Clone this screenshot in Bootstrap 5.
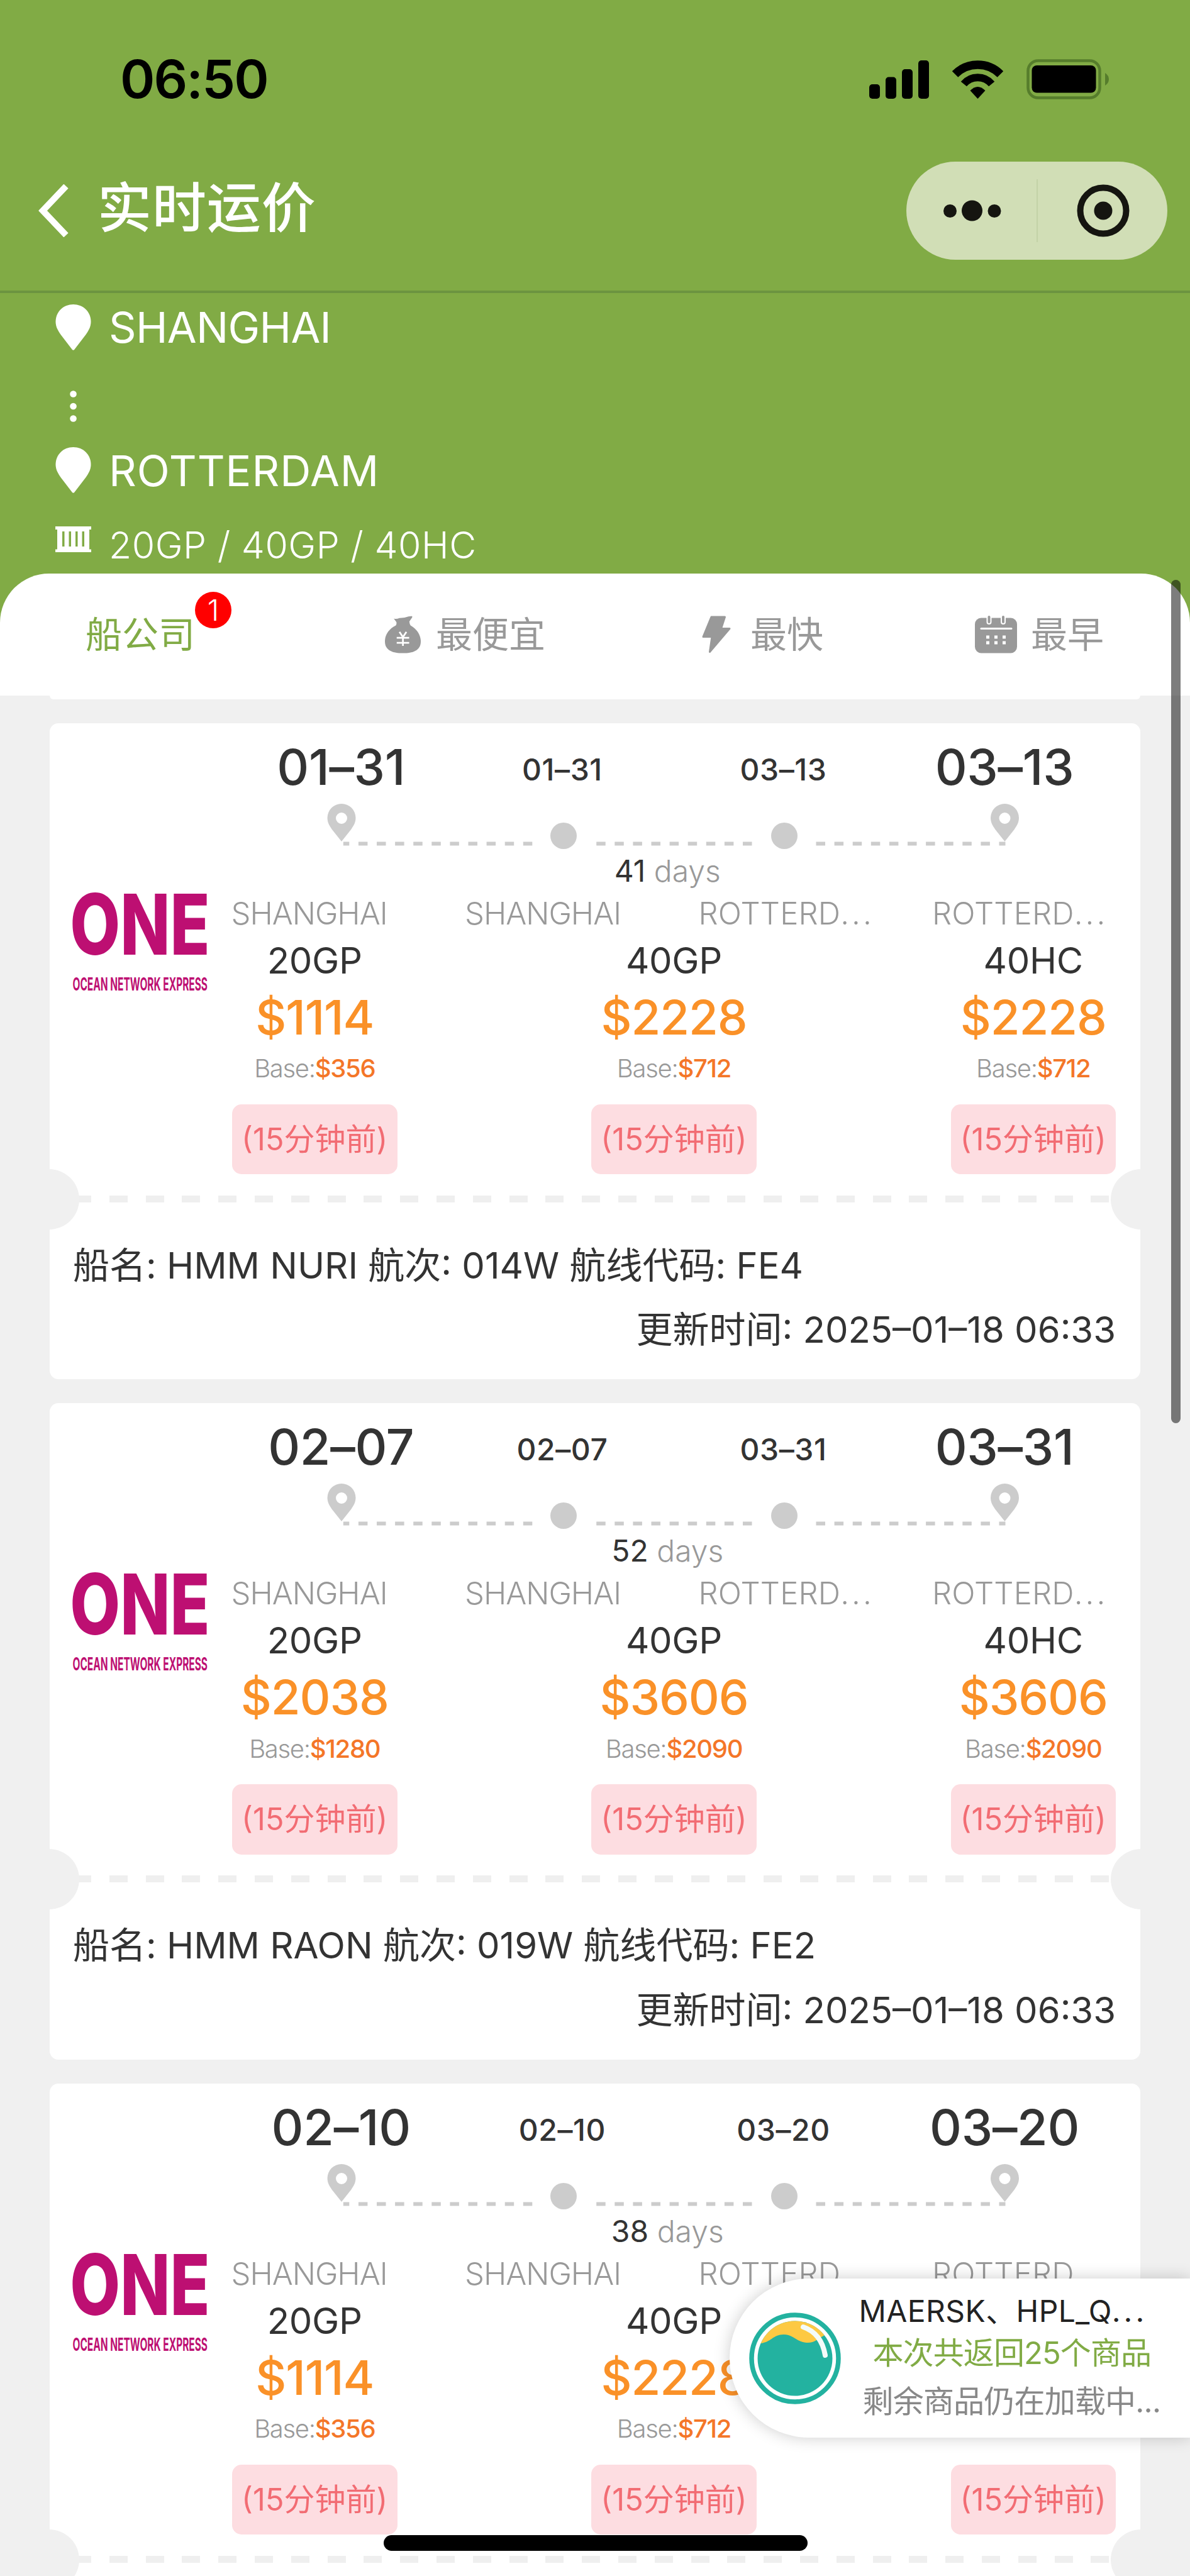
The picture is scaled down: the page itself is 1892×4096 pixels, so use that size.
<!DOCTYPE html>
<html lang="zh-CN">
<head>
<meta charset="utf-8">
<meta name="viewport" content="width=device-width, initial-scale=1">
<title>实时运价</title>
<link href="https://cdn.jsdelivr.net/npm/bootstrap@5.3.0/dist/css/bootstrap.min.css" rel="stylesheet">
<style>
  :root { --brand: #81ab45; --page: #f0f0f0; --one: #bd0f72; }
  body { font-family: Inter, "Noto Sans CJK SC", sans-serif; background: var(--page); color: #333; font-size: 58px; line-height: 1; }
  svg { display: block; flex: none; }
  .screen { width: 1892px; height: 4096px; }
  .brand-bg { background: var(--brand); }

  .statusbar { height: 252px; padding: 0 129px 0 191px; }
  .clock { font-size: 84px; font-weight: 600; letter-spacing: -1.9px; color: #000; }
  .wifi { margin: 0 37px 0 36px; }
  .topnav { height: 213.5px; padding: 7px 36px 50px 61px; border-bottom: 4.5px solid #6c9440; }
  .page-title { font-size: 86px; font-weight: 500; letter-spacing: .9px; margin-left: 45px; padding-bottom: 8px; }
  .capsule { width: 415px; height: 156px; background: #d1deb6; border-radius: 78px; }
  .capsule-sep { width: 2px; height: 100px; background: #c3d2a7; }

  .route { height: 446.1px; padding-left: 88px; font-size: 68px; }
  .route-ico { width: 57px; margin-right: 28px; }
  .row-from { height: 109px; letter-spacing: -.7px; }
  .row-gap { height: 142px; }
  .row-to { height: 62px; letter-spacing: 1px; }
  .row-box { height: 133px; padding-top: 58px; font-size: 59px; line-height: 60px; font-weight: 340; letter-spacing: .5px; }

  .tabs-sheet { height: 194.4px; border-radius: 78px 78px 0 0; padding-left: 136px; color: #999; }
  .tab-first { width: 476px; color: var(--brand); }
  .tab-cheap { width: 504px; }
  .tab-fast { width: 434px; }
  .tab-item svg { margin-right: 24px; }
  .tab-item.tab-fast svg { margin-right: 26px; }
  .tab-item.tab-early svg { margin-right: 22px; }
  .tab-count { width: 58px; height: 58px; background: #f00; font-size: 47px; font-weight: 300; top: -39px; left: 174px; }
  .filter-edge { height: 6px; margin: 0 79px 38px; border-radius: 0 0 6px 6px; }

  .fare { height: 1043.5px; margin: 0 79px 38px; border-radius: 14px; }
  .carrier { width: 287.5px; padding: 270px 0 0 36.5px; }
  .carrier svg { overflow: visible; fill: var(--one); font-family: Inter, sans-serif; }
  .fare-main { width: 1407.5px; }
  .dates { height: 128px; }
  .dates > div { width: 351.6px; text-align: center; font-weight: 500; font-size: 48px; line-height: 147px; letter-spacing: .6px; }
  .dates > .big { font-size: 79px; line-height: 139px; letter-spacing: -.3px; }
  .transit { height: 71px; line-height: 70px; font-size: 48px; padding-right: 18px; }
  .transit span { color: #999; font-weight: 350; }
  .ports { height: 64px; line-height: 64px; font-size: 49px; font-weight: 340; color: #999; letter-spacing: -1px; padding-left: 1px; }
  .ports > div { width: 291px; }
  .ports > div:last-child { width: 292px; }
  .ports .cut { letter-spacing: .2px; }
  .ports .cut span { letter-spacing: 4px; }
  .quotes { padding-left: 2.5px; }
  .quote { width: 262.5px; text-align: center; }
  .q-type { height: 84.6px; line-height: 84.6px; font-size: 58px; letter-spacing: -.3px; }
  .q-price { height: 96.8px; line-height: 95px; font-size: 76px; font-weight: 500; letter-spacing: -1.1px; color: #fa9128; }
  .q-base { height: 66.6px; line-height: 66.6px; font-size: 40px; font-weight: 360; letter-spacing: -1.3px; color: #999; }
  .q-base span { color: #f47628; font-weight: 500; }
  .q-ago { margin-top: 23px; height: 111.5px; line-height: 111.5px; border-radius: 15px; background: #fddde1; color: #f26c73; font-size: 49px; }
  .tear { margin-top: 33.5px; height: 11px; }
  .tear-line { height: 11px; margin: 0 37px; background: repeating-linear-gradient(90deg, #efefef 0 29px, transparent 29px 57.8px); }
  .notch { width: 96px; height: 96px; background: var(--page); top: -42px; }
  .notch.l { left: -49px; } .notch.r { right: -49px; }
  .vessel { padding: 49px 39px 0 37px; line-height: 102.5px; }

  .scroll-thumb { width: 15px; height: 1341px; left: 1861.5px; top: 922px; border-radius: 8px; background: rgba(0,0,0,.51); }
  .loading { left: 1159.5px; top: 3623px; width: 732.5px; height: 253px; border-radius: 127px 0 0 127px; padding-left: 31px; box-shadow: 0 0 26px rgba(0,0,0,.2); }
  .loading-text { padding: 17px 0 0 29px; white-space: nowrap; }
  .lt-1 { height: 69px; line-height: 69px; font-size: 48px; color: #222; letter-spacing: .4px; }
  .lt-1 span { letter-spacing: 5px; }
  .lt-2 { height: 66px; line-height: 66px; font-size: 49px; color: var(--brand); letter-spacing: -.9px; padding-left: 22px; }
  .lt-3 { height: 88px; line-height: 88px; font-size: 49px; color: #888; letter-spacing: -.8px; padding-left: 6px; }
  .home-bar { left: 609.5px; top: 4031px; width: 674px; height: 24.5px; }
</style>
</head>
<body>
<svg width="0" height="0" class="position-absolute">
  <symbol id="pin" viewBox="0 0 56 73"><path d="M28 0C12 0 0 12 0 27.500C0 36 4 42 8 48L26 71.500Q28 74 30 71.500L48 48C52 42 56 36 56 27.500C56 12 44 0 28 0z"/></symbol>
  <symbol id="track" viewBox="0 0 1407 72">
    <g fill="none" stroke="#ccc" stroke-width="6">
      <path d="M178.800 63.500H481.500" stroke-dasharray="14.500 14.600" stroke-dashoffset="5"/>
      <path d="M581.200 63.500H828.700" stroke-dasharray="14.500 14.600"/>
      <path d="M930.500 63.500H1231.500" stroke-dasharray="14.500 14.600"/>
    </g>
    <g fill="#ccc">
      <circle cx="529" cy="51" r="21"/><circle cx="880" cy="51" r="21"/>
      <path fill-rule="evenodd" d="M176 0a22.500 22.500 0 0 0-22.500 22.500c0 8 4 13 7 18L176 60l15.500-19.500c3-5 7-10 7-18A22.500 22.500 0 0 0 176 0zm0 14a9 9 0 1 1 0 18a9 9 0 0 1 0-18z"/>
      <path fill-rule="evenodd" d="M1230.500 0a22.500 22.500 0 0 0-22.500 22.500c0 8 4 13 7 18L1230.500 60l15.500-19.500c3-5 7-10 7-18A22.500 22.500 0 0 0 1230.500 0zm0 14a9 9 0 1 1 0 18a9 9 0 0 1 0-18z"/>
    </g>
  </symbol>
</svg>

<div class="screen position-relative overflow-hidden">
  <header class="brand-bg text-white">
    <div class="statusbar d-flex align-items-center justify-content-between">
      <div class="clock">06:50</div>
      <div class="d-flex align-items-center">
        <svg width="96" height="61" viewBox="0 0 96 61"><rect y="38" width="17" height="23" rx="5"/><rect x="26" y="26.500" width="17" height="34.500" rx="5"/><rect x="52" y="14" width="17" height="47" rx="5"/><rect x="78" width="17" height="61" rx="5"/></svg>
        <svg class="wifi" width="81" height="61" viewBox="0 0 81 61"><g fill="none" stroke="#000"><path d="M4.500 22A50.700 50.700 0 0 1 76.500 22" stroke-width="13.500"/><path d="M18.300 37.500A29 29 0 0 1 62.700 37.500" stroke-width="12"/></g><path d="M28.500 48Q40.500 36 52.500 48L40.500 61z"/></svg>
        <svg width="131" height="64" viewBox="0 0 131 64"><rect x="2.500" y="2.500" width="114" height="59" rx="16" fill="none" stroke="#567d2c" stroke-width="4.500"/><rect x="8.500" y="10" width="102" height="43.500" rx="8"/><path d="M125 22q6 4 6 10t-6 10z" fill="#567d2c"/></svg>
      </div>
    </div>
    <nav class="topnav d-flex align-items-center">
      <svg width="49" height="84" viewBox="0 0 49 84"><path d="M44 3L7 42L44 81" fill="none" stroke="#fff" stroke-width="10"/></svg>
      <div class="page-title">实时运价</div>
      <div class="capsule d-flex align-items-center ms-auto">
        <svg width="207" height="60" viewBox="0 0 207 60" fill="#151510"><circle cx="69.500" cy="30.500" r="10.500"/><circle cx="104.500" cy="30" r="16.500"/><circle cx="140" cy="30.500" r="10.500"/></svg>
        <div class="capsule-sep"></div>
        <svg width="206" height="90" viewBox="0 0 206 90"><circle cx="104" cy="45" r="36.500" fill="none" stroke="#151510" stroke-width="10"/><circle cx="104" cy="45" r="14.500" fill="#151510"/></svg>
      </div>
    </nav>
    <section class="route">
      <div class="row-from d-flex align-items-center"><svg class="route-ico" height="73" fill="#fff"><use href="#pin"/></svg>SHANGHAI</div>
      <div class="row-gap d-flex align-items-center"><svg class="route-ico" height="50" viewBox="0 0 57 50" fill="#fff"><circle cx="28.500" cy="5.500" r="5.300"/><circle cx="28.500" cy="25" r="5.300"/><circle cx="28.500" cy="44.500" r="5.300"/></svg></div>
      <div class="row-to d-flex align-items-center"><svg class="route-ico" height="73" fill="#fff"><use href="#pin"/></svg>ROTTERDAM</div>
      <div class="row-box d-flex align-items-start"><svg class="route-ico" height="41" viewBox="0 0 57 41"><path fill="#fff" fill-rule="evenodd" d="M0 0H57V5H54V36.500H57V41H0V36.500H3V5H0zM11 8V32H14.500V8zM21.500 8V32H25V8zM32 8V32H35.500V8zM42.500 8V32H46V8z"/></svg>20GP / 40GP / 40HC</div>
    </section>
  </header>

  <div class="brand-bg">
    <div class="tabs-sheet bg-white d-flex align-items-center">
      <div class="tab-item tab-first position-relative">船公司<span class="tab-count position-absolute rounded-circle text-white d-flex align-items-center justify-content-center">1</span></div>
      <div class="tab-item tab-cheap d-flex align-items-center">
        <svg width="57" height="60" viewBox="0 0 207 215"><path fill="#999" d="M51 15Q66 20 84 12Q108 12 120 8Q138 0 156 1Q160 4 156 10L141 32Q142 46 148 55C186 76 207 112 207 147C207 200 160 215 104 215S0 200 0 147C0 108 24 74 63 55Q69 46 66 35Z"/><g fill="none" stroke="#fff" stroke-width="10"><path d="M84 92L104 122L124 92M104 120V173M68 126H140M68 155H140"/></g></svg>最便宜</div>
      <div class="tab-item tab-fast d-flex align-items-center">
        <svg width="51" height="60" viewBox="0 0 51 60"><path d="M15 2H36.500L30.500 20.500H44L12.500 57.500L16 33.500H2z" fill="#999" stroke="#999" stroke-width="3" stroke-linejoin="round"/></svg>最快</div>
      <div class="tab-item tab-early d-flex align-items-center">
        <svg width="67" height="60" viewBox="0 0 67 60"><rect y="3.500" width="67" height="56" rx="10" fill="#999"/><g stroke-linecap="round"><path d="M22.500 3V10M45 3V10" stroke="#fff" stroke-width="8"/><path d="M22.500 2V10M45 2V10" stroke="#999" stroke-width="4"/><path d="M10 20.500H58" stroke="#fff" stroke-width="3"/></g><path d="M18 34H49M18 43H49" stroke="#fff" stroke-width="5" stroke-dasharray="5 8"/></svg>最早</div>
    </div>
  </div>
  <div class="filter-edge bg-white"></div>

  <main>
    <article class="fare bg-white">
      <div class="d-flex">
        <div class="carrier"><svg width="214" height="160" viewBox="0 0 214 160"><text transform="scale(.772 1)" x="-6" y="97.500" font-size="134" font-weight="800">ONE</text><text transform="scale(.553 1)" x="-1" y="155.500" font-size="28" font-weight="700">OCEAN NETWORK EXPRESS</text></svg></div>
        <div class="fare-main">
          <div class="dates d-flex"><div class="big">01–31</div><div>01–31</div><div>03–13</div><div class="big">03–13</div></div>
          <svg width="1407" height="72"><use href="#track"/></svg>
          <div class="transit text-center">41 <span>days</span></div>
          <div class="ports d-flex justify-content-between"><div>SHANGHAI</div><div>SHANGHAI</div><div class="cut">ROTTERD<span>...</span></div><div class="cut">ROTTERD<span>...</span></div></div>
          <div class="quotes d-flex justify-content-between">
            <div class="quote"><div class="q-type">20GP</div><div class="q-price">$1114</div><div class="q-base">Base:<span>$356</span></div><div class="q-ago">(15分钟前)</div></div>
            <div class="quote"><div class="q-type">40GP</div><div class="q-price">$2228</div><div class="q-base">Base:<span>$712</span></div><div class="q-ago">(15分钟前)</div></div>
            <div class="quote"><div class="q-type">40HC</div><div class="q-price">$2228</div><div class="q-base">Base:<span>$712</span></div><div class="q-ago">(15分钟前)</div></div>
          </div>
        </div>
      </div>
      <div class="tear position-relative"><div class="tear-line"></div><i class="notch l rounded-circle position-absolute"></i><i class="notch r rounded-circle position-absolute"></i></div>
      <div class="vessel"><div>船名: HMM NURI 航次: 014W 航线代码: FE4</div><div class="text-end">更新时间: 2025–01–18 06:33</div></div>
    </article>

    <article class="fare bg-white">
      <div class="d-flex">
        <div class="carrier"><svg width="214" height="160" viewBox="0 0 214 160"><text transform="scale(.772 1)" x="-6" y="97.500" font-size="134" font-weight="800">ONE</text><text transform="scale(.553 1)" x="-1" y="155.500" font-size="28" font-weight="700">OCEAN NETWORK EXPRESS</text></svg></div>
        <div class="fare-main">
          <div class="dates d-flex"><div class="big">02–07</div><div>02–07</div><div>03–31</div><div class="big">03–31</div></div>
          <svg width="1407" height="72"><use href="#track"/></svg>
          <div class="transit text-center">52 <span>days</span></div>
          <div class="ports d-flex justify-content-between"><div>SHANGHAI</div><div>SHANGHAI</div><div class="cut">ROTTERD<span>...</span></div><div class="cut">ROTTERD<span>...</span></div></div>
          <div class="quotes d-flex justify-content-between">
            <div class="quote"><div class="q-type">20GP</div><div class="q-price">$2038</div><div class="q-base">Base:<span>$1280</span></div><div class="q-ago">(15分钟前)</div></div>
            <div class="quote"><div class="q-type">40GP</div><div class="q-price">$3606</div><div class="q-base">Base:<span>$2090</span></div><div class="q-ago">(15分钟前)</div></div>
            <div class="quote"><div class="q-type">40HC</div><div class="q-price">$3606</div><div class="q-base">Base:<span>$2090</span></div><div class="q-ago">(15分钟前)</div></div>
          </div>
        </div>
      </div>
      <div class="tear position-relative"><div class="tear-line"></div><i class="notch l rounded-circle position-absolute"></i><i class="notch r rounded-circle position-absolute"></i></div>
      <div class="vessel"><div>船名: HMM RAON 航次: 019W 航线代码: FE2</div><div class="text-end">更新时间: 2025–01–18 06:33</div></div>
    </article>

    <article class="fare bg-white">
      <div class="d-flex">
        <div class="carrier"><svg width="214" height="160" viewBox="0 0 214 160"><text transform="scale(.772 1)" x="-6" y="97.500" font-size="134" font-weight="800">ONE</text><text transform="scale(.553 1)" x="-1" y="155.500" font-size="28" font-weight="700">OCEAN NETWORK EXPRESS</text></svg></div>
        <div class="fare-main">
          <div class="dates d-flex"><div class="big">02–10</div><div>02–10</div><div>03–20</div><div class="big">03–20</div></div>
          <svg width="1407" height="72"><use href="#track"/></svg>
          <div class="transit text-center">38 <span>days</span></div>
          <div class="ports d-flex justify-content-between"><div>SHANGHAI</div><div>SHANGHAI</div><div class="cut">ROTTERD<span>...</span></div><div class="cut">ROTTERD<span>...</span></div></div>
          <div class="quotes d-flex justify-content-between">
            <div class="quote"><div class="q-type">20GP</div><div class="q-price">$1114</div><div class="q-base">Base:<span>$356</span></div><div class="q-ago">(15分钟前)</div></div>
            <div class="quote"><div class="q-type">40GP</div><div class="q-price">$2228</div><div class="q-base">Base:<span>$712</span></div><div class="q-ago">(15分钟前)</div></div>
            <div class="quote"><div class="q-type">&nbsp;</div><div class="q-price">&nbsp;</div><div class="q-base">&nbsp;</div><div class="q-ago">(15分钟前)</div></div>
          </div>
        </div>
      </div>
      <div class="tear position-relative"><div class="tear-line"></div><i class="notch l rounded-circle position-absolute"></i><i class="notch r rounded-circle position-absolute"></i></div>
    </article>
  </main>

  <div class="scroll-thumb position-absolute"></div>

  <aside class="loading position-absolute bg-white d-flex">
    <svg class="align-self-center" width="146" height="146" viewBox="0 0 146 146">
      <defs><clipPath id="disk"><circle cx="73" cy="73" r="59.500"/></clipPath></defs>
      <circle cx="73" cy="73" r="69" fill="none" stroke="#23b2a0" stroke-width="7.500"/>
      <g clip-path="url(#disk)"><rect width="146" height="146" fill="#23b2a0"/><path d="M0 0H146V30L122 35C108 42 104 49 91 48C76 47 70 35 55 35C38 35 34 48 18 49L0 60z" fill="#fdc943"/></g>
      <path d="M86 23Q115 33 121 68" fill="none" stroke="#f3fbf9" stroke-width="8" stroke-linecap="round"/>
    </svg>
    <div class="loading-text">
      <div class="lt-1">MAERSK、HPL_Q<span>...</span></div>
      <div class="lt-2">本次共返回25个商品</div>
      <div class="lt-3">剩余商品仍在加载中...</div>
    </div>
  </aside>

  <div class="home-bar position-absolute bg-black rounded-pill"></div>
</div>
<script src="https://cdn.jsdelivr.net/npm/bootstrap@5.3.0/dist/js/bootstrap.bundle.min.js"></script>
</body>
</html>
